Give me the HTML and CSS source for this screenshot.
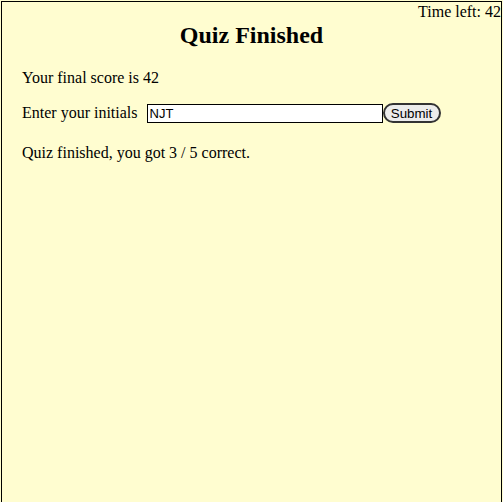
FILE: index.html
```html
<!DOCTYPE html>
<html>
<head>
<meta charset="utf-8">
<link rel="stylesheet" href="styles.css">
<title>Quiz</title>
</head>
<body>
<div class="page">
  <div class="timer">Time left: 42</div>
  <h1 class="title">Quiz Finished</h1>
  <div class="content">
    <p class="line score">Your final score is 42</p>
    <form class="line form-row">
      <label class="label" for="initials">Enter your initials</label>
      <input class="initials" id="initials" type="text" value="NJT">
      <button class="submit" type="button">Submit</button>
    </form>
    <p class="line result">Quiz finished, you got 3 / 5 correct.</p>
  </div>
</div>
</body>
</html>
```

FILE: styles.css
```css
html, body {
  margin: 0;
  padding: 0;
  background: #fffdd0;
}
body {
  font-family: "Liberation Serif", "Times New Roman", serif;
  font-size: 16px;
  color: #000;
}
.page {
  margin: 1px 1px 0 1px;
  border: 1px solid #000;
  border-bottom: none;
  min-height: 520px;
  box-sizing: border-box;
}
.timer {
  text-align: right;
  line-height: 18px;
  margin-top: 1px;
}
.title {
  text-align: center;
  font-size: 24px;
  font-weight: bold;
  margin: 0;
  line-height: 28px;
}
.content {
  padding: 0 20px;
}
.line {
  margin: 0;
  line-height: 18px;
}
.score {
  margin-top: 20px;
}
.form-row {
  display: flex;
  align-items: center;
  margin-top: 16px;
}
.result {
  margin-top: 21px;
}
.label {
  margin-right: 9px;
}
.initials {
  width: 236px;
  height: 19px;
  box-sizing: border-box;
  border: 1px solid #000;
  padding: 0 2px;
  margin: 0;
  font-family: "Liberation Sans", Arial, sans-serif;
  font-size: 13px;
  background: #fff;
  color: #000;
}
.submit {
  width: 58px;
  height: 20px;
  box-sizing: border-box;
  margin: 0;
  padding: 0 4px;
  border: 2px solid #333;
  border-radius: 10px;
  background: #ececec;
  font-family: "Liberation Sans", Arial, sans-serif;
  font-size: 13.333px;
  color: #000;
}
```
